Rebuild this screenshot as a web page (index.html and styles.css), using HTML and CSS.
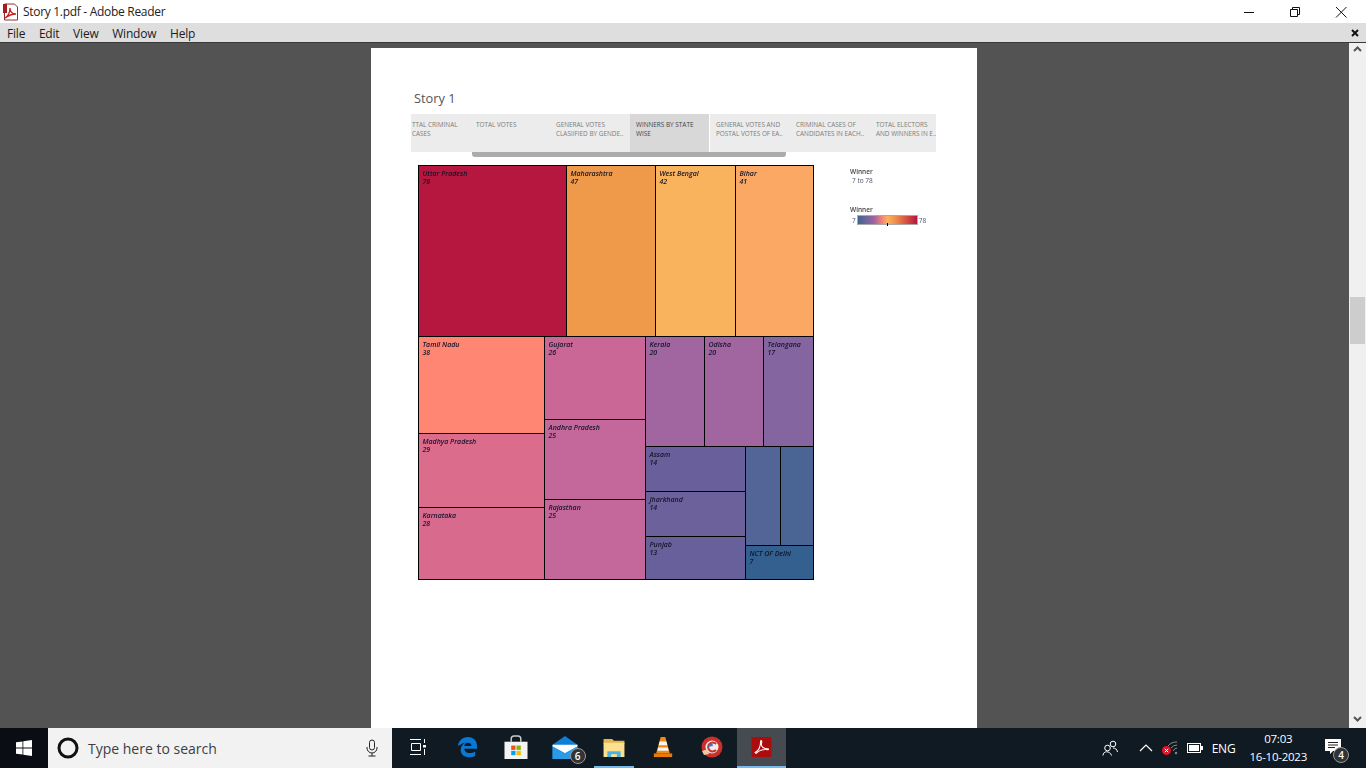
FILE: index.html
```html
<!DOCTYPE html>
<html lang="en">
<head>
  <meta charset="UTF-8">
  <meta name="viewport" content="width=device-width, initial-scale=1.0">
  <title>Story 1.pdf - Adobe Reader</title>
  <link rel="stylesheet" href="styles.css">
</head>
<body>
  <div class="titlebar">
    <svg class="pdf-icon" width="18" height="18" viewBox="0 0 18 18">
      <path d="M2.500 1h10l3 3v13h-13z" fill="#fff" stroke="#8c2f2f"/>
      <rect x="1" y="1" width="4" height="9" fill="#a91c1c"/>
      <path d="M3 15c3-2 5-6 5-10 0 4 2 6 6 6-4 0-7 1-11 4z" fill="none" stroke="#c8201c" stroke-width="1.300"/>
    </svg>
    <span class="title-text">Story 1.pdf - Adobe Reader</span>
    <div class="win-controls">
      <svg class="win-btn" width="46" height="20" viewBox="0 0 46 20"><path d="M18 10.500h10" stroke="#111"/></svg>
      <svg class="win-btn" width="46" height="20" viewBox="0 0 46 20"><path d="M18.500 7.500h7v7h-7zM20.500 7.500v-2h7v7h-2" fill="none" stroke="#111"/></svg>
      <svg class="win-btn" width="46" height="20" viewBox="0 0 46 20"><path d="M18 5l10.500 10.500M28.500 5L18 15.500" stroke="#111" fill="none"/></svg>
    </div>
  </div>

  <div class="menubar">
    <span class="menu-item">File</span>
    <span class="menu-item">Edit</span>
    <span class="menu-item">View</span>
    <span class="menu-item">Window</span>
    <span class="menu-item">Help</span>
    <svg class="menu-close" width="8" height="8" viewBox="0 0 8 8"><path d="M1 1l6 6M7 1L1 7" stroke="#111" stroke-width="2"/></svg>
  </div>

  <div class="viewer">
    <div class="doc-area">
      <div class="page">
        <h2 class="story-title">Story 1</h2>
        <div class="tabs">
          <div class="tab tab-first">TTAL CRIMINAL<br>CASES</div>
          <div class="tab">TOTAL VOTES</div>
          <div class="tab">GENERAL VOTES<br>CLASIIFIED BY GENDE..</div>
          <div class="tab tab-active">WINNERS BY STATE<br>WISE</div>
          <div class="tab">GENERAL VOTES AND<br>POSTAL VOTES OF EA..</div>
          <div class="tab">CRIMINAL CASES OF<br>CANDIDATES IN EACH..</div>
          <div class="tab">TOTAL ELECTORS<br>AND WINNERS IN E..</div>
        </div>
        <div class="tabs-scroll"><div class="tabs-thumb"></div></div>

        <div class="dashboard">
          <div class="treemap">
            <div class="tm-row row-top">
              <div class="cell up">Uttar Pradesh<br>78</div>
              <div class="cell mh">Maharashtra<br>47</div>
              <div class="cell wb">West Bengal<br>42</div>
              <div class="cell br">Bihar<br>41</div>
            </div>
            <div class="tm-row row-bottom">
              <div class="tm-col col-a">
                <div class="cell tn">Tamil Nadu<br>38</div>
                <div class="cell mp">Madhya Pradesh<br>29</div>
                <div class="cell ka">Karnataka<br>28</div>
              </div>
              <div class="tm-col col-b">
                <div class="cell gj">Gujarat<br>26</div>
                <div class="cell ap">Andhra Pradesh<br>25</div>
                <div class="cell rj">Rajasthan<br>25</div>
              </div>
              <div class="tm-col col-c">
                <div class="tm-row row-kerala">
                  <div class="cell kl">Kerala<br>20</div>
                  <div class="cell od">Odisha<br>20</div>
                  <div class="cell tg">Telangana<br>17</div>
                </div>
                <div class="tm-row row-small">
                  <div class="tm-col col-assam">
                    <div class="cell as">Assam<br>14</div>
                    <div class="cell jh">Jharkhand<br>14</div>
                    <div class="cell pb">Punjab<br>13</div>
                  </div>
                  <div class="tm-col col-rest">
                    <div class="tm-row row-blank">
                      <div class="cell blank-1"></div>
                      <div class="cell blank-2"></div>
                    </div>
                    <div class="cell dl">NCT OF Delhi<br>7</div>
                  </div>
                </div>
              </div>
            </div>
          </div>

          <div class="legend">
            <div class="legend-title">Winner</div>
            <div class="legend-range">7 to 78</div>
            <div class="legend-title legend-second">Winner</div>
            <div class="legend-scale">
              <span>7</span>
              <div class="legend-bar"><i class="legend-tick"></i></div>
              <span>78</span>
            </div>
          </div>
        </div>
      </div>
    </div>
    <div class="scrollbar">
      <svg class="scroll-arrow" width="17" height="10" viewBox="0 0 17 10"><path d="M5 7l3.500-3.500L12 7" fill="none" stroke="#555" stroke-width="2"/></svg>
      <div class="scroll-track"><div class="scroll-thumb"></div></div>
      <svg class="scroll-arrow" width="17" height="10" viewBox="0 0 17 10"><path d="M5 3l3.500 3.500L12 3" fill="none" stroke="#555" stroke-width="2"/></svg>
    </div>
  </div>

  <div class="taskbar">
    <div class="start">
      <svg width="16" height="16" viewBox="0 0 16 16"><path d="M0 2.300l6.500-.9v6.200H0zM7.300 1.300L16 0v7.600H7.300zM0 8.400h6.500v6.200L0 13.700zM7.300 8.400H16V16l-8.700-1.300z" fill="#fff"/></svg>
    </div>
    <div class="search">
      <svg class="cortana" width="22" height="22" viewBox="0 0 22 22"><circle cx="11" cy="11" r="9" fill="none" stroke="#111" stroke-width="3"/></svg>
      <span class="search-text">Type here to search</span>
      <svg class="mic" width="12" height="18" viewBox="0 0 12 18"><rect x="3.500" y="1" width="5" height="10" rx="2.500" fill="none" stroke="#222"/><path d="M1 8v1a5 5 0 0 0 10 0V8M6 14v3M2.500 17h7" fill="none" stroke="#222"/></svg>
    </div>
    <div class="task-icons">
      <div class="task-icon task-view">
        <svg width="16" height="16" viewBox="0 0 16 16"><path d="M0 .5h11M1.500 4.500h9v7h-9zM0 15.500h11M14.500 0v4M14.500 10v6" fill="none" stroke="#fff"/><rect x="13" y="6" width="3" height="2.500" fill="#fff"/></svg>
      </div>
      <div class="task-icon">
        <svg width="20" height="22" viewBox="0 0 22 24"><path d="M1 11C2 4 7 1 12 1c6 0 10 4 10 10v3H8c0 5 7 6 12 3v5c-7 3-16 1-16-7 0-3 2-6 5-8-3 1-6 3-8 4zm7 0h8c0-5-8-5-8 0z" fill="#0a78d4"/></svg>
      </div>
      <div class="task-icon">
        <svg width="24" height="24" viewBox="0 0 24 25"><path d="M7 7V4c0-2 1-3 3-3h4c2 0 3 1 3 3v3" fill="none" stroke="#ccc" stroke-width="1.500"/><rect y="7" width="24" height="18" fill="#f4f4f4"/><rect x="7" y="11" width="4.500" height="4.500" fill="#f25022"/><rect x="12.500" y="11" width="4.500" height="4.500" fill="#7fba00"/><rect x="7" y="16.500" width="4.500" height="4.500" fill="#00a4ef"/><rect x="12.500" y="16.500" width="4.500" height="4.500" fill="#ffb900"/></svg>
      </div>
      <div class="task-icon">
        <svg width="26" height="23" viewBox="0 0 26 24"><path d="M0 9L13 0l13 9v15H0z" fill="#0f7fd6"/><path d="M0 9h26v2L13 18 0 11z" fill="#fff"/><path d="M0 11l13 7 13-7v13H0z" fill="#2b9be8"/></svg>
        <span class="task-badge">6</span>
      </div>
      <div class="task-icon task-open">
        <svg width="22" height="19" viewBox="0 0 22 20"><path d="M0 1h9l2 2h11v3H0z" fill="#e3b84c"/><rect y="5" width="22" height="15" fill="#fbe08f"/><rect x="4" y="14" width="14" height="6" fill="#4ab2e4"/><rect x="8" y="17" width="6" height="3" fill="#fbe08f"/></svg>
      </div>
      <div class="task-icon">
        <svg width="20" height="22" viewBox="0 0 20 24"><path d="M7.500 1h5l5 18h-15z" fill="#f28a12"/><path d="M6.300 6h7.400l1 4H5.300zM4.800 12.500h10.400l1 3.500H3.800z" fill="#f6f6f6"/><path d="M0 19h20v4H0z" fill="#e8790c"/></svg>
      </div>
      <div class="task-icon">
        <svg width="22" height="22" viewBox="0 0 22 22"><circle cx="11" cy="11" r="10.500" fill="#c9302c"/><circle cx="11" cy="11" r="6.500" fill="#f2ebe6"/><path d="M15 8a4.500 4.500 0 1 0 0 6" fill="none" stroke="#c9302c" stroke-width="2"/><path d="M1 15l6-2 1 5-5 1z" fill="#edc9a6"/><path d="M6 11l5-5 1 4z" fill="#3c78c8"/></svg>
      </div>
      <div class="task-icon task-active">
        <svg width="21" height="20" viewBox="0 0 22 22"><rect width="22" height="22" rx="1" fill="#ad0c0c"/><path d="M4 17c4-2 6-7 6-12 0-2 2-1 1 2-1 4 3 6 7 6 1 0 1 1 0 1-5-1-9 0-13 4z" fill="none" stroke="#fff" stroke-width="1.200"/></svg>
      </div>
    </div>
    <div class="tray">
      <svg class="tray-people" width="16" height="16" viewBox="0 0 16 16"><circle cx="5.500" cy="8" r="2.800" fill="none" stroke="#fff"/><circle cx="11" cy="4" r="2.800" fill="none" stroke="#fff"/><path d="M1 15.500c0-5 7-5 8.500 0M11 8c2 0 4 1 4.500 4" fill="none" stroke="#fff"/></svg>
      <svg class="tray-chevron" width="14" height="8" viewBox="0 0 14 8"><path d="M1 7l6-6 6 6" fill="none" stroke="#fff" stroke-width="1.200"/></svg>
      <svg class="tray-wifi" width="16" height="14" viewBox="0 0 16 14"><path d="M15 1a11 11 0 0 0-9 4M15 4a8 8 0 0 0-6 3M15 7a5 5 0 0 0-4 3" fill="none" stroke="#8a8a8a"/><circle cx="14" cy="12" r="1.200" fill="#8a8a8a"/><circle cx="4.500" cy="9.500" r="4.500" fill="#e81123"/><path d="M2.800 7.800l3.400 3.400M6.200 7.800l-3.400 3.400" stroke="#fff"/></svg>
      <svg class="tray-battery" width="16" height="10" viewBox="0 0 16 10"><rect x=".5" y=".5" width="13" height="9" fill="none" stroke="#fff"/><rect x="2" y="2" width="10" height="6" fill="#fff"/><rect x="14" y="3" width="2" height="4" fill="#fff"/></svg>
      <span class="tray-lang">ENG</span>
      <div class="tray-clock">
        <span>07:03</span>
        <span>16-10-2023</span>
      </div>
      <div class="tray-notify">
        <svg width="18" height="18" viewBox="0 0 18 18"><path d="M0 1h16v12H8l-3 3v-3H0z" fill="#fff"/><path d="M3 4.500h10M3 7h10M3 9.500h7" stroke="#222"/></svg>
        <span class="notify-badge">4</span>
      </div>
    </div>
  </div>
</body>
</html>
```

FILE: styles.css
```css
/* app shell */
html, body {
  margin: 0;
  height: 768px;
  overflow: hidden;
}
body {
  display: flex;
  flex-direction: column;
  font-family: "Open Sans", sans-serif;
  background-color: #535353;
  color: #111;
}

/* title bar */
.titlebar {
  height: 23px;
  background-color: #fff;
  display: flex;
  align-items: center;
  flex-shrink: 0;
}
.pdf-icon {
  margin-left: 2px;
}
.title-text {
  margin-left: 3px;
  font-size: 12px;
  letter-spacing: -0.3px;
  color: #222;
}
.win-controls {
  margin-left: auto;
  display: flex;
  margin-right: 2px;
}
.win-btn {
  display: block;
}

/* menu */
.menubar {
  height: 18px;
  background-color: #dedede;
  border-bottom: 1px solid #3a3a3a;
  display: flex;
  align-items: center;
  padding: 1px 0 0 7px;
  flex-shrink: 0;
  font-size: 12px;
  letter-spacing: -0.2px;
}
.menu-item {
  margin-right: 13.700px;
  color: #1c1c1c;
}
.menu-close {
  margin-left: auto;
  margin-right: 7px;
}

/* document area */
.viewer {
  flex: 1;
  display: flex;
  min-height: 0;
}
.doc-area {
  flex: 1;
  padding: 5px 0 0 371px;
  background-color: #535353;
  overflow: hidden;
}
.page {
  width: 606px;
  height: 680px;
  background-color: #fff;
  padding-left: 40px;
  box-sizing: border-box;
}
.story-title {
  margin: 0;
  padding: 41px 0 0 3px;
  height: 66px;
  box-sizing: border-box;
  font-size: 12.800px;
  line-height: 18px;
  font-weight: 400;
  color: #555;
}

/* story tabs */
.tabs {
  width: 525px;
  height: 38px;
  background-color: #ececec;
  display: flex;
  overflow: hidden;
}
.tab {
  width: 80px;
  flex-shrink: 0;
  box-sizing: border-box;
  padding: 6px 0 0 6px;
  font-size: 6.400px;
  line-height: 9px;
  color: #7b7b7b;
  white-space: nowrap;
  overflow: hidden;
}
.tab-first {
  width: 59px;
  padding-left: 1px;
}
.tab-active {
  background-color: #d8d8d8;
  border-right: 1px solid #fff;
  color: #444;
}
.tabs-scroll {
  height: 5px;
  padding-left: 61px;
}
.tabs-thumb {
  width: 314px;
  height: 5px;
  background-color: #acacac;
  border-radius: 0 0 3px 3px;
}

/* treemap + legend */
.dashboard {
  display: flex;
  margin: 8px 0 0 7px;
}
.treemap {
  width: 396px;
  height: 415px;
  box-sizing: border-box;
  padding: 1px;
  background-color: #000;
  display: flex;
  flex-direction: column;
  gap: 1px;
}
.tm-row {
  display: flex;
  gap: 1px;
}
.tm-col {
  display: flex;
  flex-direction: column;
  gap: 1px;
}
.cell {
  box-sizing: border-box;
  padding: 4px 3.500px 0;
  font-size: 7px;
  line-height: 8px;
  font-style: italic;
  font-weight: 600;
  color: #14142a;
  white-space: nowrap;
  overflow: hidden;
  filter: blur(0.25px);
}

.row-top { height: 170px; }
.row-bottom { height: 242px; }
.up { width: 147px; background-color: #b5173e; }
.mh { width: 88px; background-color: #ef9a4a; }
.wb { width: 79px; background-color: #f9b35c; }
.br { width: 77px; background-color: #fba864; }

.col-a { width: 125px; }
.col-b { width: 100px; }
.col-c { width: 167px; }
.tn { height: 96px; background-color: #fe8673; }
.mp { height: 73px; background-color: #dc6c8c; }
.ka { height: 71px; background-color: #d86b8d; }
.gj { height: 82px; background-color: #cb6796; }
.ap { height: 79px; background-color: #c4689b; }
.rj { height: 79px; background-color: #c4689b; }

.row-kerala { height: 109px; }
.row-small { height: 132px; }
.kl { width: 58px; background-color: #a1659f; }
.od { width: 58px; background-color: #a1659f; }
.tg { width: 49px; background-color: #8565a0; }
.col-assam { width: 99px; }
.col-rest { width: 67px; }
.as { height: 44px; background-color: #695f9a; }
.jh { height: 44px; background-color: #6c619b; }
.pb { height: 42px; background-color: #67609a; }
.row-blank { height: 98px; }
.blank-1 { width: 34px; background-color: #536497; }
.blank-2 { width: 32px; background-color: #4a6493; }
.dl { height: 33px; background-color: #33608f; }

.legend {
  margin-left: 36px;
  padding-top: 2px;
  font-size: 6.500px;
  line-height: 9px;
  color: #4a5470;
  filter: blur(0.2px);
}
.legend-title {
  font-weight: 600;
  color: #444;
}
.legend-range {
  padding-left: 2px;
}
.legend-second {
  margin-top: 20px;
}
.legend-scale {
  display: flex;
  align-items: center;
  margin-top: 1px;
  padding-left: 2px;
  gap: 1px;
}
.legend-bar {
  position: relative;
  width: 59px;
  height: 8px;
  border: 1px solid #aaa;
  background: linear-gradient(to right, #3f6592, #a1659f 28%, #fe8673 42%, #f9b35c 50%, #ef8a4a 65%, #b5173e);
}
.legend-tick {
  position: absolute;
  left: 29px;
  bottom: -2px;
  width: 1px;
  height: 3px;
  background-color: #000;
}

/* viewer scrollbar */
.scrollbar {
  width: 17px;
  background-color: #f0f0f0;
  display: flex;
  flex-direction: column;
  flex-shrink: 0;
}
.scroll-arrow {
  display: block;
  flex-shrink: 0;
}
.scrollbar .scroll-arrow:first-child {
  margin-top: 1px;
}
.scroll-track {
  flex: 1;
  padding-top: 243px;
}
.scroll-thumb {
  width: 15px;
  height: 47px;
  margin-left: 1px;
  background-color: #cdcdcd;
}
.scrollbar .scroll-arrow:last-child {
  margin-bottom: 4px;
}

/* taskbar */
.taskbar {
  height: 40px;
  flex-shrink: 0;
  background-color: #0f1a22;
  display: flex;
  align-items: stretch;
  color: #fff;
}
.start {
  width: 48px;
  background-color: #0b0d14;
  display: flex;
  align-items: center;
  justify-content: center;
}
.search {
  width: 344px;
  background-color: #f2f2f2;
  display: flex;
  align-items: center;
  padding: 0 14px 0 9px;
  box-sizing: border-box;
}
.search-text {
  margin-left: 9px;
  font-size: 14px;
  color: #3a3f44;
}
.mic {
  margin-left: auto;
}
.task-icons {
  display: flex;
  padding-left: 0.5px;
}
.task-icon {
  position: relative;
  width: 49px;
  padding-bottom: 2px;
  display: flex;
  align-items: center;
  justify-content: center;
  box-sizing: border-box;
}
.task-view {
  width: 50px;
}
.task-open::after {
  content: "";
  position: absolute;
  left: 4px;
  right: 5px;
  bottom: 0;
  height: 2px;
  background-color: #76b9ed;
}
.task-active {
  background-color: #454b50;
}
.task-active::after {
  content: "";
  position: absolute;
  left: 0;
  right: 0;
  bottom: 0;
  height: 2px;
  background-color: #76b9ed;
}
.task-badge,
.notify-badge {
  position: absolute;
  width: 14px;
  height: 14px;
  border-radius: 50%;
  background-color: #333;
  border: 1px solid #999;
  color: #fff;
  font-size: 10px;
  font-weight: 600;
  line-height: 14px;
  text-align: center;
}
.task-badge {
  right: 4px;
  bottom: 4px;
}

/* system tray */
.tray {
  margin-left: auto;
  display: flex;
  align-items: center;
  padding-right: 19px;
  font-size: 12px;
}
.tray-people { margin-right: 21px; }
.tray-chevron { margin-right: 9px; }
.tray-wifi { margin-right: 9px; }
.tray-battery { margin-right: 9px; }
.tray-lang { margin-right: 14px; letter-spacing: -0.2px; }
.tray-clock {
  display: flex;
  flex-direction: column;
  align-items: center;
  line-height: 18px;
  font-size: 11.500px;
  letter-spacing: -0.25px;
  margin-right: 16px;
}
.tray-notify {
  position: relative;
  width: 24px;
  height: 24px;
  padding: 2px 0 0 2px;
  box-sizing: border-box;
}
.notify-badge {
  right: -2px;
  bottom: -3px;
}
```
